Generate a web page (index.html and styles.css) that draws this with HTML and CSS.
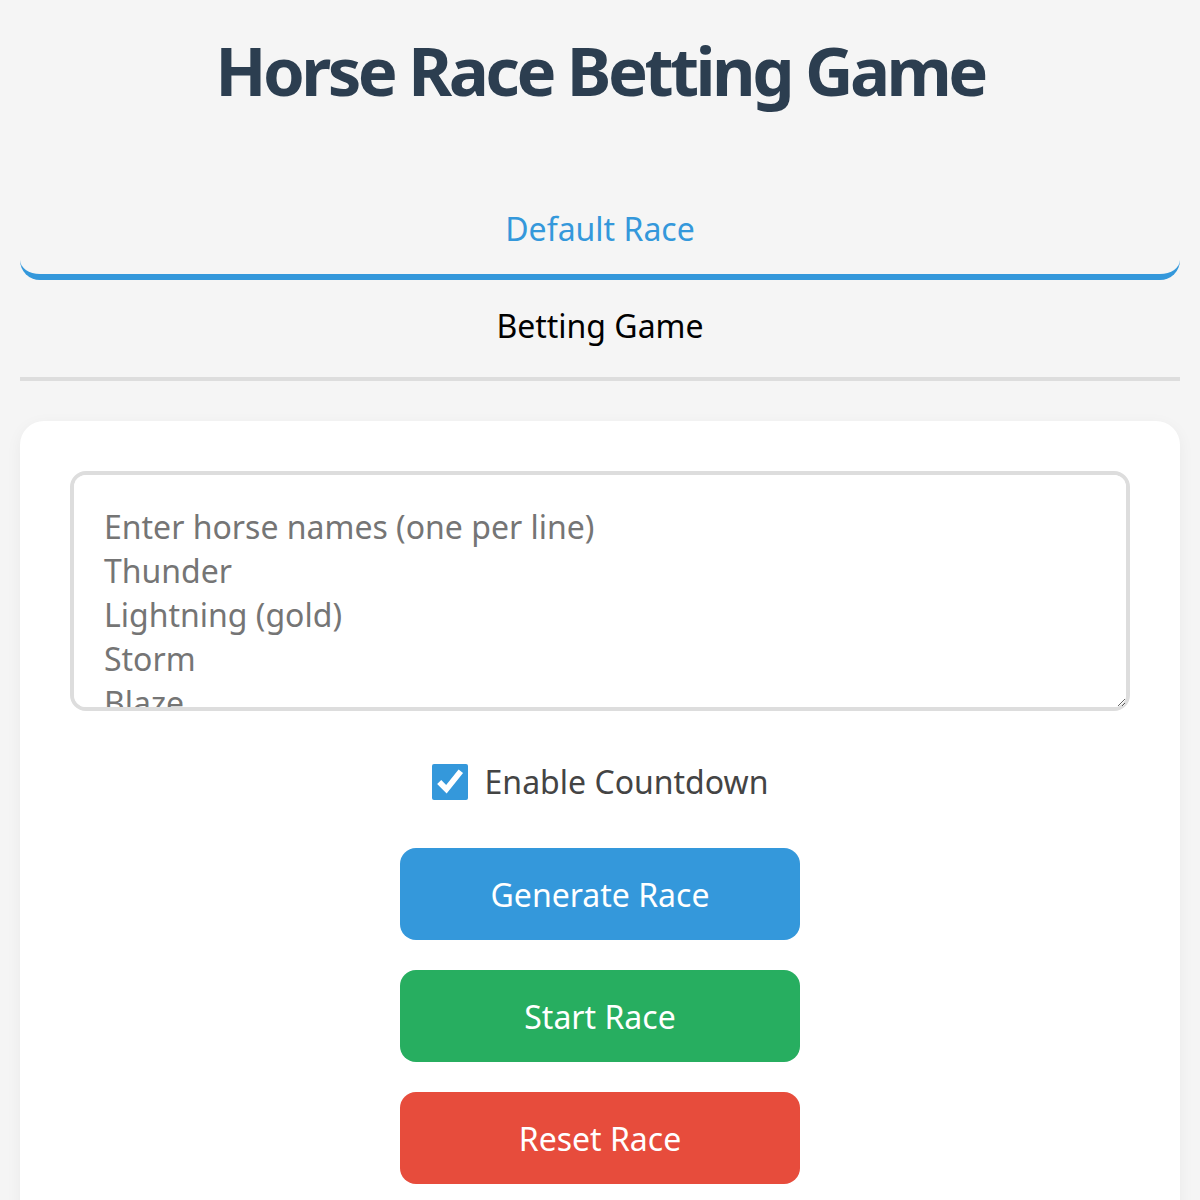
FILE: index.html
```html
<!DOCTYPE html>
<html lang="en">
<head>
    <meta charset="UTF-8">
    <meta name="viewport" content="width=device-width, initial-scale=1.0">
    <title>Horse Race Betting Game</title>
    <link rel="stylesheet" href="styles.css">
</head>
<body>

<div class="container">
    <h1>Horse Race Betting Game</h1>

    <div class="tabs">
        <button class="tab active" data-tab="default-race">Default Race</button>
        <button class="tab" data-tab="betting-game">Betting Game</button>
    </div>

    <div class="tab-content" id="default-race">
        <textarea id="horse-names" placeholder="Enter horse names (one per line)&#10;Thunder&#10;Lightning (gold)&#10;Storm&#10;Blaze&#10;Spirit"></textarea>

        <label class="countdown-option">
            <input type="checkbox" id="countdown" checked>
            <span>Enable Countdown</span>
        </label>

        <div class="controls">
            <button class="btn btn-generate">Generate Race</button>
            <button class="btn btn-start">Start Race</button>
            <button class="btn btn-reset">Reset Race</button>
        </div>
    </div>
</div>

</body>
</html>
```

FILE: styles.css
```css
/* Basic reset */
* {
    margin: 0;
    padding: 0;
    box-sizing: border-box;
}

body {
    font-family: "Noto Sans", "Open Sans", sans-serif;
    background-color: #f5f5f5;
    color: #333;
}

.container {
    padding: 24px 20px 0;
}

h1 {
    text-align: center;
    font-size: 67px;
    font-weight: 700;
    letter-spacing: -3.5px;
    line-height: 92px;
    color: #2c3e50;
    margin-bottom: 67px;
}

/* Tabs */
.tabs {
    display: flex;
    flex-direction: column;
    border-bottom: 4px solid #ddd;
    margin-bottom: 40px;
}

.tab {
    font-family: inherit;
    font-size: 32px;
    color: #000;
    background: none;
    border: none;
    border-bottom: 6px solid transparent;
    border-radius: 20px;
    padding: 24px 0;
    cursor: pointer;
}

.tab.active {
    color: #3498db;
    border-bottom-color: #3498db;
}

/* Main card */
.tab-content {
    background-color: white;
    border-radius: 24px;
    padding: 50px 50px 60px;
    box-shadow: 0 4px 16px rgba(0, 0, 0, 0.05);
    display: flex;
    flex-direction: column;
    align-items: center;
}

.tab-content textarea {
    width: 100%;
    height: 240px;
    font-family: inherit;
    font-size: 32px;
    line-height: 44px;
    padding: 30px;
    border: 4px solid #ddd;
    border-radius: 16px;
    resize: vertical;
    color: #333;
}

.tab-content textarea::placeholder {
    color: #757575;
}

.countdown-option {
    display: flex;
    align-items: center;
    gap: 17px;
    margin: 49px 0 45px;
    font-size: 32px;
    color: #444;
    cursor: pointer;
}

.countdown-option input {
    width: 36px;
    height: 36px;
    accent-color: #3498db;
}

/* Buttons */
.controls {
    display: flex;
    flex-direction: column;
    gap: 30px;
}

.btn {
    width: 400px;
    height: 92px;
    font-family: inherit;
    font-size: 32px;
    color: white;
    border: none;
    border-radius: 16px;
    cursor: pointer;
}

.btn-generate {
    background-color: #3498db;
}

.btn-start {
    background-color: #27ae60;
}

.btn-reset {
    background-color: #e74c3c;
}

.btn:hover {
    opacity: 0.9;
}
```
